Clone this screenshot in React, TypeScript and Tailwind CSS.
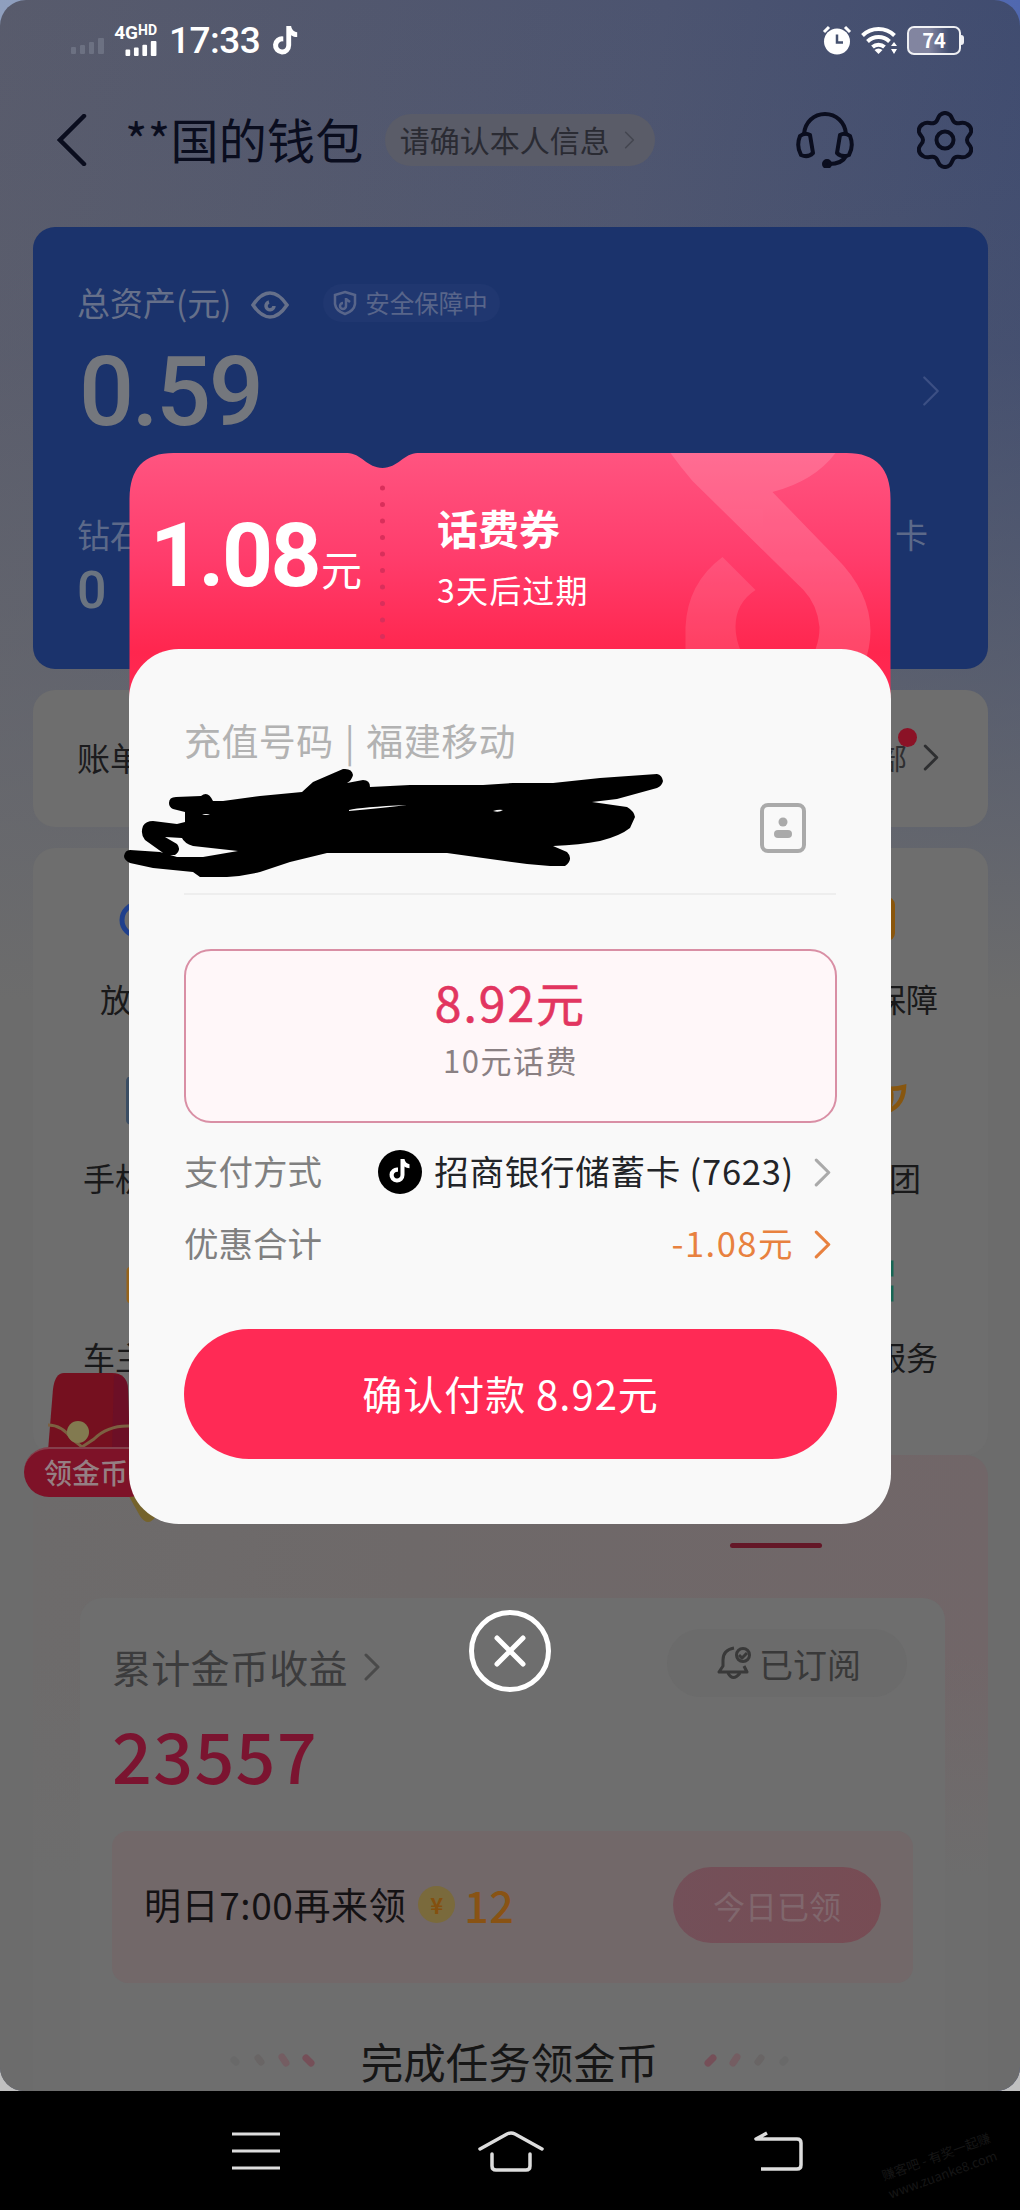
import type { ReactNode } from "react";

const NOTE =
  "M12.5 0h4c.3 2.6 2.2 4.8 5 5.2v4c-1.9 0-3.6-.6-5-1.600v8.400a7.500 7.500 0 1 1-6.500-7.400v4.200a3.400 3.400 0 1 0 2.500 3.200z";

const Chevron = ({ className }: { className: string }) => (
  <svg viewBox="0 0 16 28" className={className} fill="none" stroke="currentColor" strokeLinecap="round" strokeLinejoin="round">
    <path d="M2 2l12 12L2 26" />
  </svg>
);

const SignalBars = ({ className }: { className: string }) => (
  <svg viewBox="0 0 34 16" className={className} fill="currentColor">
    <rect x="1" y="9" width="5" height="7" rx="1" />
    <rect x="10" y="7" width="5" height="9" rx="1" />
    <rect x="19" y="4" width="5" height="12" rx="1" />
    <rect x="28" y="0" width="6" height="16" rx="1" />
  </svg>
);

const StatusBar = () => (
  <div className="flex h-[80px] items-center pl-[70px] pr-[56px] text-white">
    <SignalBars className="mt-3 h-4 w-[34px] text-[#6c7182]" />
    <div className="ml-[7px] flex w-[46px] flex-col items-end">
      <div className="flex items-start font-['Roboto',sans-serif] font-bold leading-none">
        <span className="text-[19px] leading-[15px]">4G</span>
        <span className="text-[14px] leading-[11px]">HD</span>
      </div>
      <SignalBars className="mt-px h-[15px] w-[33px]" />
    </div>
    <span className="ml-[12px] font-['Roboto',sans-serif] text-[37px] font-medium leading-none tracking-[-0.500px]">17:33</span>
    <svg viewBox="0 0 22 24" className="ml-[11px] h-[29px] w-[27px]" fill="currentColor">
      <path d={NOTE} />
    </svg>
    <svg viewBox="0 0 30 30" className="ml-auto h-[30px] w-[30px]" fill="currentColor">
      <circle cx="15" cy="16.500" r="13" />
      <path d="M2 7l5-5M28 7l-5-5" stroke="currentColor" strokeWidth="3" />
      <path d="M15 9.500v8h6" fill="none" stroke="#45516f" strokeWidth="2.500" />
    </svg>
    <svg viewBox="0 0 38 30" className="ml-[9px] h-[30px] w-[38px]" fill="none" stroke="currentColor" strokeWidth="4">
      <path d="M1.500 10.500a23 23 0 0 1 32 0M6.500 16.500a16 16 0 0 1 22 0M11.500 22a9 9 0 0 1 12 0" />
      <path d="M13.500 25a6 6 0 0 1 8 0l-4 4z" fill="currentColor" stroke="none" />
      <path d="M33 17l3 4h-6zM33 29l3-5h-6z" fill="currentColor" stroke="none" />
    </svg>
    <div className="ml-[8px] flex items-center">
      <div className="flex h-[29px] w-[54px] items-center justify-center rounded-[7px] border-[2.500px] border-white/90 bg-gradient-to-r from-[#8285a0] from-40% to-transparent to-80% text-[20px] font-bold leading-none">
        74
      </div>
      <div className="h-[10px] w-[3px] rounded-r bg-white/90" />
    </div>
  </div>
);

const Header = () => (
  <div className="flex h-[120px] items-center pl-[57px] pr-[47px] text-[#0a0d1e]">
    <svg viewBox="0 0 30 52" className="h-[52px] w-[30px]" fill="none" stroke="currentColor" strokeWidth="4.500" strokeLinecap="round">
      <path d="M27 2L3 26l24 24" />
    </svg>
    <h1 className="-mt-[5px] ml-[38px] text-[48px] leading-none tracking-[0.300px]">**国的钱包</h1>
    <div className="ml-[21px] flex h-[52px] w-[270px] items-center rounded-full bg-[#5a5c68] pb-[2px] pl-[15px] text-[30px] text-[#2a2b33]">
      请确认本人信息
      <Chevron className="ml-[14px] mt-[2px] h-[18px] w-[11px] stroke-[2.500] text-[#444650]" />
    </div>
    <svg viewBox="0 0 58 56" className="ml-auto h-[56px] w-[58px]" fill="none" stroke="currentColor" strokeWidth="4" strokeLinejoin="round" strokeLinecap="round">
      <path d="M8 22C9 10 18 2 29 2s20 8 21 20" />
      <path d="M4 24q5-4 10-1l3 18q-5 5-12 2-5-9-1-19zM54 24q-5-4-10-1l-3 18q5 5 12 2 5-9 1-19z" />
      <path d="M50 44c-3 6-9 8-17 8" />
      <circle cx="31" cy="52" r="3" fill="currentColor" />
    </svg>
    <svg viewBox="0 0 56 58" className="ml-[63px] h-[58px] w-[56px]" fill="none" stroke="currentColor" strokeWidth="4" strokeLinejoin="round">
      <path d="M23 4q5-4 10 0c3 3 2 7 6 8s7-2 11 1q5 3 4 8c-1 4-4 4-4 8s3 4 4 8q1 5-4 8c-4 3-7 0-11 1s-3 5-6 8q-5 4-10 0c-3-3-2-7-6-8s-7 2-11-1q-5-3-4-8c1-4 4-4 4-8s-3-4-4-8q-1-5 4-8c4-3 7 0 11-1s3-5 6-8z" />
      <circle cx="28" cy="29" r="8.500" />
    </svg>
  </div>
);

const AssetCard = () => (
  <section className="ml-[33px] mt-[27px] h-[442px] w-[955px] rounded-[22px] bg-[#1b336c] px-[44px] pt-[54px] text-[#74777d]">
    <div className="flex h-[44px] items-center text-[#66708a]">
      <span className="text-[33px]">总资产(元)</span>
      <svg viewBox="0 0 38 28" className="ml-[20px] mt-[3px] h-[28px] w-[38px]" fill="none" stroke="currentColor" strokeWidth="3.500">
        <path d="M2 14Q10 2 19 2t17 12Q28 26 19 26T2 14z" />
        <path d="M18 11a4 4 0 1 0 5 4" />
      </svg>
      <div className="ml-[34px] flex h-[38px] items-center rounded-full bg-[#203770] pl-[10px] pr-[12px] text-[24.500px] text-[#58658a]">
        <svg viewBox="0 0 24 26" className="mr-[8px] h-[26px] w-[24px]" fill="none" stroke="currentColor" strokeWidth="2.500">
          <path d="M12 2l10 3v9q-1 7-10 10Q3 21 2 14V5zM13 8v8a3 3 0 1 1-3-3M13 9l4 3" />
        </svg>
        安全保障中
      </div>
    </div>
    <div className="flex h-[114px] items-center justify-between pr-[4px] pt-[18px]">
      <span className="pl-[2px] pt-[2px] font-['Roboto',sans-serif] text-[97px] font-medium leading-[96px] tracking-[-2.500px]">0.59</span>
      <Chevron className="h-[32px] w-[18px] stroke-[2] text-[#3c5084]" />
    </div>
    <div className="mt-[71px] flex justify-between pr-[16px] text-[33px] leading-[48px] text-[#5c6989]">
      <span>钻石</span>
      <span>卡</span>
    </div>
    <div className="mt-[8px] font-['Roboto',sans-serif] text-[52px] font-medium leading-[50px] text-[#6b7480]">0</div>
  </section>
);

const BillCard = () => (
  <section className="ml-[33px] mt-[21px] flex h-[137px] w-[955px] items-center justify-between rounded-[22px] bg-[#6e6e6e] pb-[2px] pl-[44px] pr-[49px] text-[#1b1b1d]">
    <span className="text-[33px]">账单</span>
    <div className="relative flex items-center text-[29px] text-[#2e2f31]">
      全部
      <Chevron className="ml-[16px] h-[27px] w-[16px] stroke-[3]" />
      <i className="absolute -top-[8px] right-[22px] size-[19px] rounded-full bg-[#8b1226]" />
    </div>
  </section>
);

const services = [
  {
    left: "放",
    leftPad: "pl-[67px]",
    leftIcon: <circle cx="20" cy="22" r="16" stroke="#20408c" strokeWidth="5" fill="none" />,
    right: "保障",
    rightPad: "pr-[50px]",
    rightIcon: <rect x="0" y="2" width="24" height="38" rx="5" stroke="#8a560c" strokeWidth="6" fill="none" />,
  },
  {
    left: "手机",
    leftPad: "pl-[50px]",
    leftIcon: <rect x="10" y="1" width="26" height="45" rx="3" stroke="#3a4d63" strokeWidth="4" fill="none" />,
    right: "团",
    rightPad: "pr-[67px]",
    rightIcon: <path d="M10 9q12 5 26 1q-1 22-23 26M22 10q4 14-3 24" stroke="#87560f" strokeWidth="4.500" fill="none" />,
  },
  {
    left: "车主",
    leftPad: "pl-[50px]",
    leftIcon: <rect x="11" y="13" width="28" height="32" rx="2" stroke="#96631a" strokeWidth="5" fill="none" />,
    right: "服务",
    rightPad: "pr-[50px]",
    rightIcon: <path d="M12 7h11v11H12zM12 32h11v11H12z" stroke="#176654" strokeWidth="5" fill="none" />,
  },
];

const ServiceCard = () => (
  <section className="ml-[33px] mt-[21px] h-[607px] w-[955px] rounded-[22px] bg-[#6e6e6e] pt-[50px] text-[32px] text-[#19191a]">
    {services.map((row) => (
      <div key={row.left} className="h-[179px]">
        <div className="flex justify-between pl-[85px] pr-[76px]">
          <svg viewBox="0 0 44 60" className="h-[60px] w-[44px]">
            {row.leftIcon}
          </svg>
          <svg viewBox="0 0 44 60" className="h-[60px] w-[44px]">
            {row.rightIcon}
          </svg>
        </div>
        <div className={`flex justify-between pt-[16px] leading-[48px] ${row.leftPad} ${row.rightPad}`}>
          <span>{row.left}</span>
          <span>{row.right}</span>
        </div>
      </div>
    ))}
  </section>
);

const RedPacket = () => (
  <div className="absolute left-[24px] top-[1371px] h-[155px] w-[135px]">
    <svg viewBox="0 0 135 155" className="absolute inset-0">
      <path d="M102 120h38l-8 25q-8 12-16 0z" fill="#75632c" />
      <path d="M40 2h48q15 0 16 16l2 62H24l5-62Q31 2 40 2z" fill="#75101f" />
      <path d="M90 4q14 0 14 14l2 62H88z" fill="#650f2c" opacity=".6" />
      <path d="M24 54q14 0 24 14l10 8 12-8q14-14 36-13" fill="none" stroke="#7c6041" strokeWidth="3" />
      <circle cx="54" cy="61" r="11" fill="#827a50" />
    </svg>
    <div className="absolute left-0 top-[76px] flex h-[50px] w-[130px] items-center rounded-full border-t-2 border-[#84404c] bg-[#7e1228] pb-[2px] pl-[20px] text-[28px] font-medium text-[#957f83]">
      领金币
    </div>
  </div>
);

const Sparks = ({ className }: { className: string }) => (
  <svg viewBox="0 0 90 20" className={className} strokeWidth="7" strokeLinecap="round">
    <path d="M5 9l2 2" stroke="#696969" />
    <path d="M29 7l3 4" stroke="#696565" />
    <path d="M53 6l4 6" stroke="#745d62" />
    <path d="M77 7l5 5" stroke="#754f58" />
  </svg>
);

const CoinSection = () => (
  <section className="ml-[33px] h-[650px] w-[955px] rounded-t-[22px] bg-[linear-gradient(180deg,rgba(109,109,109,0)_0px,rgba(109,109,109,0)_200px,#6d6d6d_420px),linear-gradient(90deg,#6d6b6b_0%,#6e6969_40%,#716668_100%)]">
    <div className="flex h-[143px] items-end justify-end pb-[50px] pr-[166px]">
      <div className="h-[5px] w-[92px] rounded-full bg-[#641727]" />
    </div>
    <div className="ml-[47px] mr-[43px] h-[507px] rounded-t-[22px] bg-[#6e6e6e] px-[32px] pt-[31px]">
      <div className="flex items-center justify-between">
        <div className="flex items-center pt-[5px] text-[39px] leading-[58px] tracking-[0.300px] text-[#3c3c3d]">
          累计金币收益
          <Chevron className="ml-[16px] mt-[2px] h-[28px] w-[16px] stroke-[3] text-[#4a4a4a]" />
        </div>
        <div className="mr-[6px] flex h-[68px] w-[240px] items-center justify-center rounded-full bg-[#6b6b6b] pl-1 text-[34px] text-[#393939]">
          <svg viewBox="0 0 34 34" className="mr-[8px] h-[34px] w-[34px]" fill="none" stroke="currentColor" strokeWidth="3" strokeLinejoin="round">
            <path d="M17 2Q6 4 6 14v6l-4 6h28l-3-6M11 27q5 9 12 0" />
            <circle cx="26" cy="9" r="6.500" />
            <path d="M22 9l3 3 5-5" />
          </svg>
          已订阅
        </div>
      </div>
      <div className="mt-[17px] text-[70px] font-medium leading-[80px] tracking-[1.300px] text-[#7b1430]">23557</div>
      <div className="mt-[37px] flex h-[152px] items-center rounded-[16px] bg-[#726869] px-[32px] pb-[5px]">
        <span className="text-[37px] tracking-[0.600px] text-[#141214]">明日7:00再来领</span>
        <div className="ml-[12px] flex size-[37px] items-center justify-center rounded-full bg-[#7a6a3c] text-[22px] font-bold text-[#84500f]">
          ¥
        </div>
        <span className="ml-[9px] text-[43px] font-medium tracking-[0.500px] text-[#895314]">12</span>
        <div className="ml-auto flex h-[76px] w-[208px] items-center justify-center rounded-full bg-gradient-to-r from-[#735059] to-[#774c54] text-[32px] text-[#80676d]">
          今日已领
        </div>
      </div>
      <div className="mt-[45px] flex items-center justify-center gap-[42px] pr-[6px] text-[42.500px] leading-[66px] text-[#161616]">
        <Sparks className="h-[20px] w-[90px]" />
        完成任务领金币
        <Sparks className="h-[20px] w-[90px] -scale-x-100" />
      </div>
    </div>
  </section>
);

const Ticket = () => (
  <div className="relative h-[246px] w-[762px]">
    <svg viewBox="0 0 761 256" className="absolute left-0 top-0 h-[256px] w-[762px]">
      <defs>
        <linearGradient id="ticket" x1="0" y1="0" x2="0" y2="1">
          <stop offset="0" stopColor="#ff5480" />
          <stop offset=".4" stopColor="#ff3d6c" />
          <stop offset=".78" stopColor="#ff264e" />
          <stop offset="1" stopColor="#ff2a55" />
        </linearGradient>
      </defs>
      <path d="M0 256V46Q0 0 44 0H218C231 0 238 15 253 15S275 0 288 0H717Q761 0 761 46V256z" fill="url(#ticket)" />
      <g fill="#fff" opacity=".15">
        <path d="M541 0H706Q685 28 643 39L706 104Q741 139 741 178Q741 194 734 214H675Q690 197 690 174Q688 152 674 137L563 28Q551 14 541 0z" />
        <path opacity=".75" d="M593 104L626 137Q606 150 606 174Q606 186 612 200H556V174Q558 130 593 104z" />
      </g>
      <path d="M253 35V190" stroke="#d92f5b" strokeWidth="5" strokeDasharray="0.100 16.400" strokeLinecap="round" fill="none" />
    </svg>
    <div className="relative flex h-[196px] text-white">
      <div className="flex w-[253px] items-baseline pl-[21px] pt-[39px]">
        <span className="font-['Roboto',sans-serif] text-[89px] font-bold leading-[128px] tracking-[-2.500px]">1.08</span>
        <span className="ml-[2px] text-[41px] leading-none">元</span>
      </div>
      <div className="pl-[55px] pt-[44px]">
        <div className="text-[41px] font-bold leading-[60px]">话费券</div>
        <div className="mt-[9px] text-[32px] leading-[46px] tracking-[1.200px]">3天后过期</div>
      </div>
    </div>
  </div>
);

// Pen strokes that hide the phone number
const Scribble = () => (
  <svg viewBox="0 0 570 140" className="absolute left-[-19px] top-[101px] h-[140px] w-[570px]">
    <path
      fill="#000"
      d="M59 53Q59 47 66 47L91 46Q98 40 103 51L113 51L150 46L192 42L203 32L233 19Q242 18 243 25Q242 30 237 33L253 30Q260 30 260 37L300 35H373L403 33H443L490 28L547 24Q552 25 553 31Q552 36 547 38L507 49L482 52L517 57Q524 61 525 67L520 78Q510 86 490 91Q470 95 443 96L457 102Q464 109 455 116H440L417 114L373 108L337 103H217L180 112L150 122Q133 126 117 127H90L83 122L43 118L20 113Q14 110 14 106Q15 100 20 100L50 102L67 107H93L128 101L83 96Q74 93 72 88L55 87L67 94Q72 100 65 105H56L35 90Q30 84 33 76Q36 71 43 71L67 74L75 72V62L63 59Q59 57 59 53z"
    />
    <path d="M239 60q12-3 58-5q-24 3-58 6zM383 61q6-2 10-1q-4 3-10 1zM92 65q4-2 8 0z" fill="#f9f9f9" />
  </svg>
);

const DetailRow = ({ label, children }: { label: string; children: ReactNode }) => (
  <div className="flex h-[72px] items-center justify-between pr-[5px] text-[34.500px]">
    <span className="text-[#808080]">{label}</span>
    <div className="flex items-center">{children}</div>
  </div>
);

const PayDialog = () => (
  <div className="absolute left-[129px] top-[453px] w-[762px]">
    <Ticket />
    <div className="relative -mt-[50px] h-[875px] rounded-[50px] bg-[#f9f9f9] px-[55px]">
      <div className="pt-[64px] text-[37px] leading-[54px] tracking-[0.400px] text-[#b2b2b2] [word-spacing:2.500px]">充值号码 | 福建移动</div>
      <div className="flex h-[128px] items-center justify-end border-b-2 border-[#eeeeee] pr-[30px]">
        <svg viewBox="0 0 46 50" className="-mt-[4px] h-[50px] w-[46px] text-[#aaaaaa]" fill="currentColor">
          <rect x="2" y="2" width="42" height="46" rx="6" fill="none" stroke="currentColor" strokeWidth="4" />
          <circle cx="23" cy="19" r="4.500" />
          <rect x="14" y="27" width="18" height="8" rx="4" />
        </svg>
      </div>
      <div className="mt-[54px] flex h-[174px] w-[653px] flex-col items-center rounded-[27px] border-2 border-[#d98fa5] bg-[#fff7f9] pt-[20px]">
        <span className="text-[48px] leading-[60px] tracking-[2px] text-[#e23560] [-webkit-text-stroke:0.600px_#e23560]">8.92元</span>
        <span className="mt-[6px] text-[31px] leading-[46px] tracking-[1.500px] text-[#8a8083]">10元话费</span>
      </div>
      <div className="mt-[12px]">
        <DetailRow label="支付方式">
          <svg viewBox="0 0 44 44" className="mr-[12px] mt-[2px] h-[44px] w-[44px]">
            <circle cx="22" cy="22" r="22" fill="#000" />
            <path d={NOTE} fill="#fff" transform="translate(10 9)" />
          </svg>
          <span className="tracking-[0.750px] text-[#222428]">招商银行储蓄卡 (7623)</span>
          <Chevron className="ml-[20px] mt-[2px] h-[29px] w-[17px] stroke-[3] text-[#aaaaaa]" />
        </DetailRow>
        <DetailRow label="优惠合计">
          <span className="tracking-[1.500px] text-[#e8813f]">-1.08元</span>
          <Chevron className="ml-[20px] mt-[2px] h-[29px] w-[17px] stroke-[3] text-[#e8813f]" />
        </DetailRow>
      </div>
      <button className="mt-[50px] flex h-[130px] w-[653px] items-center justify-center rounded-full bg-[#ff2a55] pb-[2px] text-[40px] tracking-[1px] text-white">
        确认付款 8.92元
      </button>
      <Scribble />
    </div>
    <svg viewBox="0 0 82 82" className="mx-auto mt-[86px] h-[82px] w-[82px]" fill="none" stroke="#fff" strokeWidth="5" strokeLinecap="round">
      <circle cx="41" cy="41" r="38.500" />
      <path d="M28 28l26 26M54 28L28 54" />
    </svg>
  </div>
);

const NavBar = () => (
  <nav className="relative flex h-[119px] items-center bg-black pl-[232px] text-[#dddddd]">
    <svg viewBox="0 0 48 38" className="h-[38px] w-[48px]" stroke="currentColor" strokeWidth="3">
      <path d="M0 2h48M0 19h48M0 36h48" />
    </svg>
    <svg viewBox="0 0 68 42" className="ml-[197px] h-[42px] w-[68px]" fill="none" stroke="currentColor" strokeWidth="3.500" strokeLinecap="round">
      <path d="M3 19L30 4q4-2 8 0l27 15M15 24v12q0 4 4 4h30q4 0 4-4V24" />
    </svg>
    <svg viewBox="0 0 50 42" className="ml-[208px] h-[42px] w-[50px]" fill="none" stroke="currentColor" strokeWidth="3.500" strokeLinejoin="round">
      <path d="M14 3L3 9h41q4 0 4 4v22q0 4-4 4H8" />
    </svg>
    <div className="absolute bottom-[26px] right-[24px] -rotate-[20deg] text-[13px] leading-[19px] text-[#161616]">
      <div>赚客吧 - 有奖一起赚</div>
      <div>www.zuanke8.com</div>
    </div>
  </nav>
);

export default function App() {
  return (
    <div className="relative h-[2210px] w-[1020px] overflow-hidden bg-[#b0b0b2] font-['Noto_Sans_CJK_SC',sans-serif]">
      <div className="bg-[linear-gradient(180deg,rgba(190,190,190,0)_50%,#c0c0c0_90%),linear-gradient(90deg,#8f9fbe,#5068b0)]">
        <div className="h-[2091px] overflow-hidden rounded-b-[24px] rounded-t-[26px] bg-[#6d6d6d]">
          <div className="h-full bg-[linear-gradient(180deg,rgba(109,109,109,0)_0px,rgba(109,109,109,0.150)_350px,rgba(109,109,109,0.600)_700px,#6c6c6c_1000px),linear-gradient(100deg,#585b6c_0%,#4c5470_48%,#3d4a70_80%,#374475_100%)]">
            <StatusBar />
            <Header />
            <AssetCard />
            <BillCard />
            <ServiceCard />
            <CoinSection />
          </div>
        </div>
      </div>
      <NavBar />
      <RedPacket />
      <PayDialog />
    </div>
  );
}
